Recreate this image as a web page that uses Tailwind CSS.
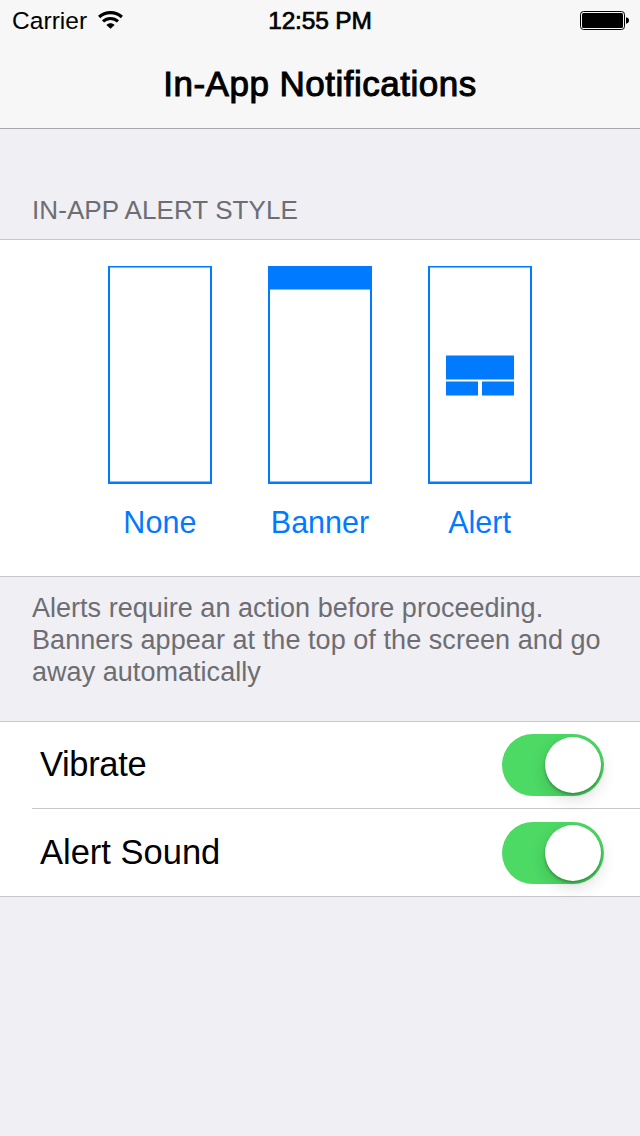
<!DOCTYPE html>
<html lang="en">
<head>
<meta charset="utf-8">
<title>In-App Notifications</title>
<script src="https://cdn.jsdelivr.net/npm/@tailwindcss/browser@4"></script>
</head>
<body class="w-[640px] h-[1136px] overflow-hidden bg-[#efeff4] text-black font-['Liberation_Sans',Arial,sans-serif]">
<header class="h-[129px] bg-[#f7f7f7] border-b border-[#a7a7aa]">
  <div class="h-10 grid grid-cols-3 items-center text-[24.5px] leading-[38px]">
    <div class="flex items-center gap-[11px] pl-3 h-10">
      <span class="tracking-[0.05px] pt-0.5">Carrier</span>
      <svg class="w-[25px] h-[18px] -mt-px" viewBox="0 0 25 18" fill="none" stroke="#000" stroke-width="3.1">
        <path d="M1.1 6C7.4 0.1 17.6 0.1 23.9 6"/>
        <path d="M5 10.4C9.2 6.5 15.8 6.5 20 10.4"/>
        <path d="M12.5 17.8L8.4 13.9C10.6 11.6 14.4 11.6 16.6 13.9Z" fill="#000" stroke="none"/>
      </svg>
    </div>
    <div class="text-center tracking-[-0.15px] pt-0.5 [-webkit-text-stroke:0.7px_#000]">12:55 PM</div>
    <div class="flex justify-end pr-[11px]">
      <svg class="w-[49px] h-[19px]" viewBox="0 0 49 19">
        <rect x="0.5" y="0.5" width="44" height="18" rx="3" fill="none" stroke="#000"/>
        <rect x="2" y="2" width="41" height="15" rx="1.5"/>
        <path d="M46 6.3C48 6.6 49 7.8 49 9.5S48 12.4 46 12.7Z"/>
      </svg>
    </div>
  </div>
  <h1 class="h-[88px] leading-[88px] text-center text-[35px] tracking-[0.5px] [-webkit-text-stroke:1px_#000]">In-App Notifications</h1>
</header>
<main>
  <h2 class="h-[110px] pl-8 pt-[65px] leading-8 text-[26px] tracking-[0.08px] text-[#6d6d72]">IN-APP ALERT STYLE</h2>
  <section class="h-[338px] bg-white border-y border-[#c8c7cc] flex justify-center gap-14 pt-[26px] text-[#007aff] text-[30.5px] leading-9">
    <button class="w-[104px] flex flex-col items-center gap-5">
      <svg class="w-[104px] h-[218px] shrink-0" viewBox="0 0 104 218" fill="currentColor"><path fill-rule="evenodd" d="M0 0H104V218H0ZM2 1.5V215.5H102V1.5Z"/></svg>
      <span class="tracking-[0.1px]">None</span>
    </button>
    <button class="w-[104px] flex flex-col items-center gap-5">
      <svg class="w-[104px] h-[218px] shrink-0" viewBox="0 0 104 218" fill="currentColor"><path fill-rule="evenodd" d="M0 0H104V218H0ZM2 23.5V215.5H102V23.5Z"/></svg>
      <span>Banner</span>
    </button>
    <button class="w-[104px] flex flex-col items-center gap-5">
      <svg class="w-[104px] h-[218px] shrink-0" viewBox="0 0 104 218" fill="currentColor"><path fill-rule="evenodd" d="M0 0H104V218H0ZM2 1.5V215.5H102V1.5Z"/><path d="M18 89.5H86V113.5H18ZM18 115.5H50V129.5H18ZM54 115.5H86V129.5H54Z"/></svg>
      <span class="pr-px">Alert</span>
    </button>
  </section>
  <p class="h-[144px] pl-8 pt-[15px] text-[27px] leading-8 text-[#6d6d72] whitespace-nowrap"><span class="tracking-[0.02px]">Alerts require an action before proceeding.</span><br><span class="tracking-[0.06px]">Banners appear at the top of the screen and go</span><br><span class="tracking-[0.04px]">away automatically</span></p>
  <section class="h-[176px] bg-white border-y border-[#c8c7cc] text-[34.5px]">
    <div class="pl-8">
      <div class="h-[87px] border-b border-[#c8c7cc] pl-2 pr-9 flex items-center justify-between">
        <span class="tracking-[-0.35px]">Vibrate</span>
        <span class="w-[102px] h-[62px] rounded-full bg-[#4cd964] flex items-center justify-end pr-[3px]"><span class="size-14 rounded-full bg-white shadow-[0_6px_16px_rgba(0,0,0,0.15),0_2px_3px_rgba(0,0,0,0.28)]"></span></span>
      </div>
      <div class="h-[87px] pl-2 pr-9 flex items-center justify-between">
        <span>Alert Sound</span>
        <span class="w-[102px] h-[62px] rounded-full bg-[#4cd964] flex items-center justify-end pr-[3px]"><span class="size-14 rounded-full bg-white shadow-[0_6px_16px_rgba(0,0,0,0.15),0_2px_3px_rgba(0,0,0,0.28)]"></span></span>
      </div>
    </div>
  </section>
</main>
</body>
</html>
